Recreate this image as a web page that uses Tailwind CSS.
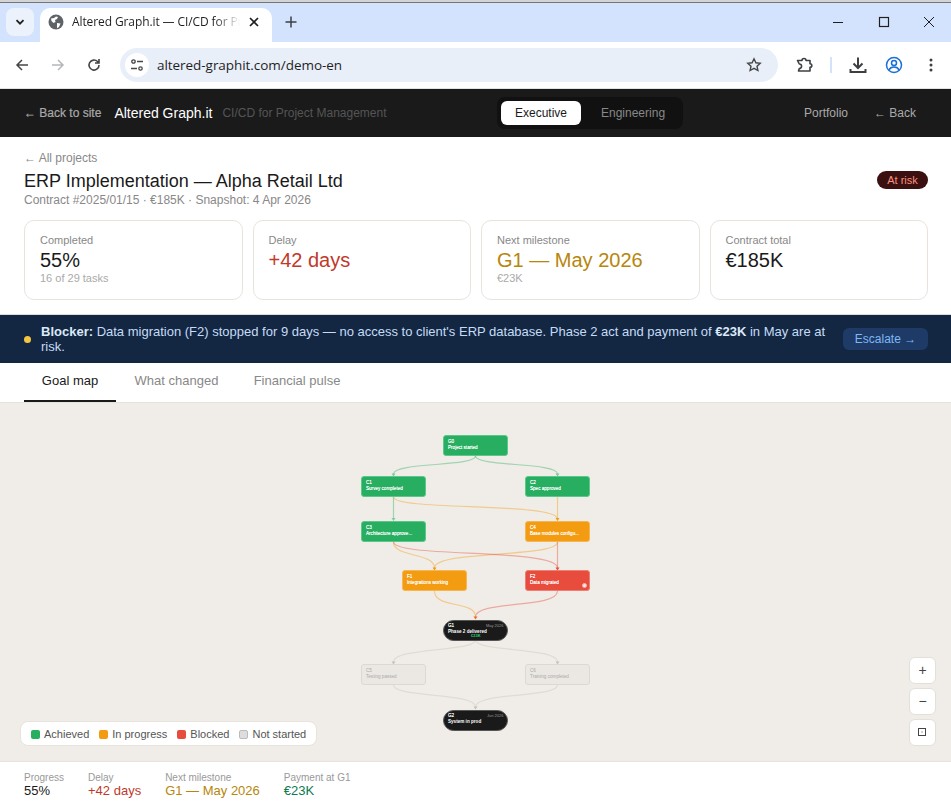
<!DOCTYPE html>
<html lang="en">
<head>
<meta charset="utf-8">
<title>Altered Graph.it — CI/CD for Project Management</title>
<script src="https://cdn.jsdelivr.net/npm/@tailwindcss/browser@4"></script>
</head>
<body class="h-[804px] w-[951px] overflow-hidden bg-white font-['Liberation_Sans',Arial,sans-serif] flex flex-col">

<!-- browser chrome -->
<div class="h-[2px] shrink-0 bg-[#d4d4d4]"></div>
<div class="h-[1px] shrink-0 bg-[#757575]"></div>
<div class="h-[39px] shrink-0 bg-[#d3e3fd] flex items-start relative">
  <div class="ml-[6px] mt-[5px] w-[28px] h-[28px] rounded-lg bg-[#ecf2fc] flex items-center justify-center">
    <svg width="12" height="12" viewBox="0 0 12 12" fill="none" stroke="#1f1f1f" stroke-width="1.8"><path d="M2.5 4.2 6 7.7l3.5-3.5"/></svg>
  </div>
  <div class="ml-[6px] mt-[5px] w-[232px] h-[34px] rounded-t-[10px] bg-white flex items-center pl-[8px] pr-[8px] pb-[6px]">
    <svg width="16" height="16" viewBox="0 0 16 16"><circle cx="8" cy="8" r="7.5" fill="#5f6368"/><path d="M3 4.5 6 4 8 2.5 10 3 9 5 7 6 7.5 8 5.5 9 3.5 7zM9 9l3.5.5L11 13l-2 1.2z" fill="#fff"/></svg>
    <div class="ml-[8px] w-[168px] overflow-hidden whitespace-nowrap text-[12px] text-[#1f1f1f] font-['Open_Sans',sans-serif] tracking-[-0.1px] [mask-image:linear-gradient(to_right,black_85%,transparent)]">Altered Graph.it — CI/CD for Project Management</div>
    <svg class="ml-[8px]" width="12" height="12" viewBox="0 0 12 12" stroke="#1f1f1f" stroke-width="1.7"><path d="M2 2l8 8M10 2l-8 8"/></svg>
  </div>
  <svg class="ml-[12px] mt-[12px]" width="14" height="14" viewBox="0 0 14 14" stroke="#3c4043" stroke-width="1.5"><path d="M7 1.5v11M1.5 7h11"/></svg>
  <div class="ml-auto flex items-center mt-[11px]">
    <svg class="mr-[30px]" width="16" height="16" viewBox="0 0 16 16" stroke="#1f1f1f" stroke-width="1"><path d="M3 8.5h10"/></svg>
    <svg class="mr-[29px]" width="16" height="16" viewBox="0 0 16 16" fill="none" stroke="#1f1f1f" stroke-width="1.2"><rect x="3.5" y="3.5" width="9" height="9"/></svg>
    <svg class="mr-[14px]" width="16" height="16" viewBox="0 0 16 16" stroke="#1f1f1f" stroke-width="1"><path d="M3 3l10 10M13 3 3 13"/></svg>
  </div>
</div>
<div class="h-[47px] shrink-0 bg-white border-b border-[#e3e3e3] flex items-center">
  <svg class="ml-[14px]" width="16" height="16" viewBox="0 0 16 16" fill="none" stroke="#444746" stroke-width="1.5"><path d="M14 8H3M8 3 3 8l5 5"/></svg>
  <svg class="ml-[20px]" width="16" height="16" viewBox="0 0 16 16" fill="none" stroke="#b4b7ba" stroke-width="1.5"><path d="M2 8h11M8 3l5 5-5 5"/></svg>
  <svg class="ml-[20px]" width="16" height="16" viewBox="0 0 16 16" fill="none" stroke="#444746" stroke-width="1.6"><path d="M13 8a5 5 0 1 1-1.5-3.5L13 6M13 2v4H9"/></svg>
  <div class="ml-[18px] w-[658px] h-[34px] rounded-full bg-[#e9eff9] flex items-center px-[5px]">
    <div class="w-[24px] h-[24px] rounded-full bg-white flex items-center justify-center">
      <svg width="14" height="14" viewBox="0 0 14 14" fill="none" stroke="#444746" stroke-width="1.3"><circle cx="3.5" cy="3.5" r="1.7"/><path d="M7 3.5h6M1 10.5h6"/><circle cx="10.5" cy="10.5" r="1.7"/></svg>
    </div>
    <span class="ml-[8px] text-[13.5px] text-[#1f1f1f] font-['Open_Sans',sans-serif] tracking-[-0.05px]">altered-graphit.com/demo-en</span>
    <svg class="ml-auto mr-[11px]" width="16" height="16" viewBox="0 0 16 16" fill="none" stroke="#444746" stroke-width="1.4"><path d="m8 1.8 1.9 4 4.3.5-3.2 2.9.9 4.3L8 11.3l-3.9 2.2.9-4.3L1.8 6.3l4.3-.5z"/></svg>
  </div>
  <svg class="ml-[17px]" width="18" height="18" viewBox="0 0 18 18" fill="none" stroke="#3c4043" stroke-width="1.6"><path d="M2.5 4.5H7a2 2 0 0 1 4 0h4v3.2a1.8 1.8 0 0 1 0 3.6V15H3.5l.8-2.5a2 2 0 0 0 0-4.5z" stroke-linejoin="round"/></svg>
  <div class="ml-[17px] w-[2px] h-[16px] bg-[#d3e3fd]"></div>
  <svg class="ml-[17px]" width="18" height="18" viewBox="0 0 18 18" fill="none" stroke="#3c4043" stroke-width="2"><path d="M9 1.5v10M4.5 7.5 9 12l4.5-4.5M1.5 13v3h15v-3"/></svg>
  <svg class="ml-[18px]" width="18" height="18" viewBox="0 0 18 18" fill="none" stroke="#1a6fd8" stroke-width="1.5"><circle cx="9" cy="9" r="7.5"/><circle cx="9" cy="7" r="2.5"/><path d="M4 14c1-2.5 3-3 5-3s4 .5 5 3"/></svg>
  <svg class="ml-[20px]" width="16" height="16" viewBox="0 0 16 16" fill="#3c4043"><circle cx="8" cy="3" r="1.5"/><circle cx="8" cy="8" r="1.5"/><circle cx="8" cy="13" r="1.5"/></svg>
</div>

<!-- app header -->
<header class="h-[48px] shrink-0 bg-[#1a1a1a] flex items-center pl-[24px] pr-[35px] relative">
  <span class="text-[12px] text-[#aaaaaa] [-webkit-text-stroke:0.2px]">← Back to site</span>
  <span class="ml-[13px] text-[14px] text-white">Altered Graph.it</span>
  <span class="ml-[10px] text-[12px] text-[#555555]">CI/CD for Project Management</span>
  <div class="absolute left-[497px] top-[8px] h-[32px] w-[186px] rounded-lg bg-[#111111] flex items-center p-[4px]">
    <span class="w-[80px] h-[24px] rounded-md bg-white text-[#1a1a1a] text-[12px] flex items-center justify-center">Executive</span>
    <span class="ml-[13px] px-[7px] text-[#888888] text-[12px]">Engineering</span>
  </div>
  <nav class="ml-auto flex items-center gap-[26px] text-[12px] text-[#aaaaaa]">
    <span>Portfolio</span>
    <span>← Back</span>
  </nav>
</header>

<!-- project header -->
<section class="h-[83px] shrink-0 pl-[24px] pr-[23px] pt-[14px] flex justify-between items-start">
  <div>
    <div class="text-[12px] leading-[14px] text-[#888888]">← All projects</div>
    <h1 class="text-[18px] leading-[21px] mt-[6px] font-normal text-[#1a1a1a]">ERP Implementation — Alpha Retail Ltd</h1>
    <div class="text-[12px] leading-[14px] mt-[1px] text-[#888888]">Contract #2025/01/15 · €185K · Snapshot: 4 Apr 2026</div>
  </div>
  <span class="mt-[20px] h-[18px] w-[51px] rounded-full bg-[#3b1010] text-[#f8907f] text-[11px] flex items-center justify-center">At risk</span>
</section>

<!-- KPI cards -->
<section class="grid grid-cols-4 gap-[10px] pl-[24px] pr-[23px] h-[80px] shrink-0">
  <div class="rounded-[10px] border border-[#e8e4dd] px-[15px] pt-[13px]">
    <div class="text-[11px] leading-[13px] text-[#888888]">Completed</div>
    <div class="text-[20px] leading-[23px] mt-[2px] text-[#1a1a1a]">55%</div>
    <div class="text-[11px] leading-[13px] text-[#aaaaaa]">16 of 29 tasks</div>
  </div>
  <div class="rounded-[10px] border border-[#e8e4dd] px-[15px] pt-[13px]">
    <div class="text-[11px] leading-[13px] text-[#888888]">Delay</div>
    <div class="text-[20px] leading-[23px] mt-[2px] text-[#c0392b]">+42 days</div>
  </div>
  <div class="rounded-[10px] border border-[#e8e4dd] px-[15px] pt-[13px]">
    <div class="text-[11px] leading-[13px] text-[#888888]">Next milestone</div>
    <div class="text-[20px] leading-[23px] mt-[2px] text-[#b7860b]">G1 — May 2026</div>
    <div class="text-[11px] leading-[13px] text-[#aaaaaa]">€23K</div>
  </div>
  <div class="rounded-[10px] border border-[#e8e4dd] px-[15px] pt-[13px]">
    <div class="text-[11px] leading-[13px] text-[#888888]">Contract total</div>
    <div class="text-[20px] leading-[23px] mt-[2px] text-[#1a1a1a]">€185K</div>
  </div>
</section>

<!-- blocker banner -->
<section class="mt-[14px] h-[49px] shrink-0 bg-[#132743] border-t border-[#dddddd] flex items-center pl-[24px] pr-[23px]">
  <span class="w-[7px] h-[7px] rounded-full bg-[#f5c542] shrink-0 mt-[1px]"></span>
  <p class="ml-[10px] w-[790px] text-[13px] leading-[15px] text-[#c5dcf5]"><b class="font-bold text-[#dbe9f8]">Blocker:</b> Data migration (F2) stopped for 9 days — no access to client's ERP database. Phase 2 act and payment of <b class="font-bold text-[#dbe9f8]">€23K</b> in May are at risk.</p>
  <button class="ml-auto mt-[-1px] h-[22px] w-[85px] rounded-md bg-[#1e3a66] text-[#7fb8f5] text-[12px] flex items-center justify-center">Escalate →</button>
</section>

<!-- tabs -->
<nav class="h-[40px] shrink-0 border-b border-[#e5e3de] px-[24px] flex text-[13px] text-[#888888]">
  <span class="h-[39px] w-[92px] pb-[2px] border-b-2 border-[#1a1a1a] text-[#1a1a1a] flex items-center justify-center">Goal map</span>
  <span class="h-[39px] w-[120px] pb-[3px] pl-[1px] flex items-center justify-center">What changed</span>
  <span class="h-[39px] w-[122px] pb-[3px] flex items-center justify-center">Financial pulse</span>
</nav>

<!-- goal map -->
<main class="relative flex-1 bg-[#f0ede8] overflow-hidden">
  <svg class="absolute left-0 top-0" width="951" height="359" viewBox="0 403 951 359" fill="none" stroke-width="1.2">
    <g stroke="#27ae60" stroke-opacity=".4">
      <path d="M475.5 456C475.5 467 393.5 462 393.5 474"/>
      <path d="M475.5 456C475.5 467 557.5 462 557.5 474"/>
      <path d="M393.5 497V519"/>
    </g>
    <g stroke="#f39c12" stroke-opacity=".42">
      <path d="M393.5 497C393.5 511 557.5 502 557.5 519"/>
      <path d="M557.5 497V519"/>
      <path d="M393.5 542C393.5 558 434.5 552 434.5 568"/>
      <path d="M557.5 542C557.5 558 434.5 550 434.5 568"/>
      <path d="M434.5 591C434.5 609 475.5 600 475.5 617"/>
    </g>
    <g stroke="#e74c3c" stroke-opacity=".42">
      <path d="M393.5 542C393.5 558 557.5 548 557.5 568"/>
      <path d="M557.5 542V568"/>
      <path d="M557.5 591C557.5 609 475.5 600 475.5 617"/>
    </g>
    <g stroke="#dfdcd6" stroke-width="1.3">
      <path d="M475.5 640C475.5 652 393.5 647 393.5 662"/>
      <path d="M475.5 640C475.5 652 557.5 647 557.5 662"/>
      <path d="M393.5 685C393.5 698 475.5 692 475.5 707"/>
      <path d="M557.5 685C557.5 698 475.5 692 475.5 707"/>
    </g>
    <g stroke="none">
      <path d="M391.5 473.5h4l-2 3z M555.5 473.5h4l-2 3z M391.5 518h4l-2 3z" fill="#7fcb9f"/>
      <path d="M555.5 518h4l-2 3z M432.5 567.5h4l-2 3z" fill="#f39c12"/>
      <path d="M555.5 567.5h4l-2 3z" fill="#e74c3c"/>
      <path d="M473.5 616.5h4l-2 3z" fill="#ef6a2a"/>
      <path d="M391.5 661.5h4l-2 3z M555.5 661.5h4l-2 3z M473.5 706.5h4l-2 3z" fill="#c4c2bd"/>
    </g>
  </svg>

  <!-- nodes -->
  <div class="absolute left-[443px] top-[31.5px] w-[64.5px] h-[21px] rounded-[3px] bg-[#27ae60] border border-[#5cc78a] pl-[4px] pt-[3px] text-white text-[4.6px] leading-[6px] [text-shadow:0_0_0.5px_white]"><div>G0</div><div class="whitespace-nowrap">Project started</div></div>
  <div class="absolute left-[361px] top-[72.7px] w-[64.5px] h-[21px] rounded-[3px] bg-[#27ae60] border border-[#5cc78a] pl-[4px] pt-[3px] text-white text-[4.6px] leading-[6px] [text-shadow:0_0_0.5px_white]"><div>C1</div><div class="whitespace-nowrap">Survey completed</div></div>
  <div class="absolute left-[525px] top-[72.7px] w-[64.5px] h-[21px] rounded-[3px] bg-[#27ae60] border border-[#5cc78a] pl-[4px] pt-[3px] text-white text-[4.6px] leading-[6px] [text-shadow:0_0_0.5px_white]"><div>C2</div><div class="whitespace-nowrap">Spec approved</div></div>
  <div class="absolute left-[361px] top-[117.7px] w-[64.5px] h-[21px] rounded-[3px] bg-[#27ae60] border border-[#5cc78a] pl-[4px] pt-[3px] text-white text-[4.6px] leading-[6px] [text-shadow:0_0_0.5px_white]"><div>C3</div><div class="whitespace-nowrap">Architecture approve...</div></div>
  <div class="absolute left-[525px] top-[117.7px] w-[64.5px] h-[21px] rounded-[3px] bg-[#f39c12] border border-[#f6b653] pl-[4px] pt-[3px] text-white text-[4.6px] leading-[6px] [text-shadow:0_0_0.5px_white]"><div>C4</div><div class="whitespace-nowrap">Base modules configu...</div></div>
  <div class="absolute left-[402px] top-[167px] w-[64.5px] h-[21px] rounded-[3px] bg-[#f39c12] border border-[#f6b653] pl-[4px] pt-[3px] text-white text-[4.6px] leading-[6px] [text-shadow:0_0_0.5px_white]"><div>F1</div><div class="whitespace-nowrap">Integrations working</div></div>
  <div class="absolute left-[525px] top-[167px] w-[64.5px] h-[21px] rounded-[3px] bg-[#e74c3c] border border-[#ee7f73] pl-[4px] pt-[3px] text-white text-[4.6px] leading-[6px] [text-shadow:0_0_0.5px_white]"><div>F2</div><div class="whitespace-nowrap">Data migrated</div><span class="absolute right-[2px] bottom-[2px] w-[5px] h-[5px] rounded-full bg-white/85 border border-[#f4b5ae]"></span></div>
  <div class="absolute left-[443px] top-[216.5px] w-[64.5px] h-[21px] rounded-full bg-[#1a1a1a] border border-[#555555] pl-[4px] pt-[2px] text-white text-[4.6px] leading-[6px]"><div class="flex justify-between pr-[3px]"><span class="[text-shadow:0_0_0.5px_white]">G1</span><span class="text-[#999999] text-[4px]">May 2026</span></div><div class="font-bold whitespace-nowrap">Phase 2 delivered</div><div class="absolute left-[27px] top-[12.5px] text-[#2ecc71] font-bold text-[4px] leading-[5px]">€23K</div></div>
  <div class="absolute left-[361px] top-[261px] w-[64.5px] h-[21px] rounded-[3px] bg-[#ebe8e3] border border-[#dcd9d4] pl-[4px] pt-[3px] text-[#aaaaaa] text-[4.6px] leading-[6px]"><div>C5</div><div class="whitespace-nowrap">Testing passed</div></div>
  <div class="absolute left-[525px] top-[261px] w-[64.5px] h-[21px] rounded-[3px] bg-[#ebe8e3] border border-[#dcd9d4] pl-[4px] pt-[3px] text-[#aaaaaa] text-[4.6px] leading-[6px]"><div>C6</div><div class="whitespace-nowrap">Training completed</div></div>
  <div class="absolute left-[443px] top-[306.5px] w-[64.5px] h-[21px] rounded-full bg-[#1a1a1a] border border-[#555555] pl-[4px] pt-[2px] text-white text-[4.6px] leading-[6px]"><div class="flex justify-between pr-[3px]"><span class="[text-shadow:0_0_0.5px_white]">G2</span><span class="text-[#999999] text-[4px]">Jun 2026</span></div><div class="font-bold whitespace-nowrap">System in prod</div></div>

  <!-- legend -->
  <div class="absolute left-[20px] top-[318px] h-[25px] w-[297px] rounded-lg bg-white border border-[#e8e4dd] flex items-center pl-[10px] pt-[1px] text-[11px] text-[#555555]">
    <span class="w-[9px] h-[9px] rounded-[2px] bg-[#27ae60]"></span><span class="ml-[4px]">Achieved</span>
    <span class="ml-[10px] w-[9px] h-[9px] rounded-[2px] bg-[#f39c12]"></span><span class="ml-[4px]">In progress</span>
    <span class="ml-[10px] w-[9px] h-[9px] rounded-[2px] bg-[#e74c3c]"></span><span class="ml-[4px]">Blocked</span>
    <span class="ml-[10px] w-[9px] h-[9px] rounded-[2px] bg-[#dddddd] border border-[#bbbbbb]"></span><span class="ml-[4px]">Not started</span>
  </div>

  <!-- zoom controls -->
  <div class="absolute left-[909px] top-[254px] flex flex-col gap-[4px]">
    <div class="w-[27px] h-[27px] rounded-md bg-white border border-[#e3e0da] flex items-center justify-center text-[14px] text-[#444444]">+</div>
    <div class="w-[27px] h-[27px] rounded-md bg-white border border-[#e3e0da] flex items-center justify-center text-[14px] text-[#444444]">−</div>
    <div class="w-[27px] h-[27px] rounded-md bg-white border border-[#e3e0da] flex items-center justify-center">
      <svg width="9" height="9" viewBox="0 0 9 9" fill="none" stroke="#444444"><rect x=".5" y=".5" width="7" height="7"/><rect x="3.5" y="3.5" width="1" height="1" fill="#444444" stroke="none"/></svg>
    </div>
  </div>
</main>

<!-- footer stats -->
<footer class="h-[43px] shrink-0 border-t border-[#e5e3de] bg-white px-[24px] pt-[10px] flex gap-[24px]">
  <div><div class="text-[10px] leading-[12px] text-[#999999]">Progress</div><div class="text-[13px] leading-[15px] mt-[-1px] text-[#1a1a1a]">55%</div></div>
  <div><div class="text-[10px] leading-[12px] text-[#999999]">Delay</div><div class="text-[13px] leading-[15px] mt-[-1px] text-[#c0392b]">+42 days</div></div>
  <div><div class="text-[10px] leading-[12px] text-[#999999]">Next milestone</div><div class="text-[13px] leading-[15px] mt-[-1px] text-[#b7860b]">G1 — May 2026</div></div>
  <div><div class="text-[10px] leading-[12px] text-[#999999]">Payment at G1</div><div class="text-[13px] leading-[15px] mt-[-1px] text-[#0e7a4f]">€23K</div></div>
</footer>
</body>
</html>
